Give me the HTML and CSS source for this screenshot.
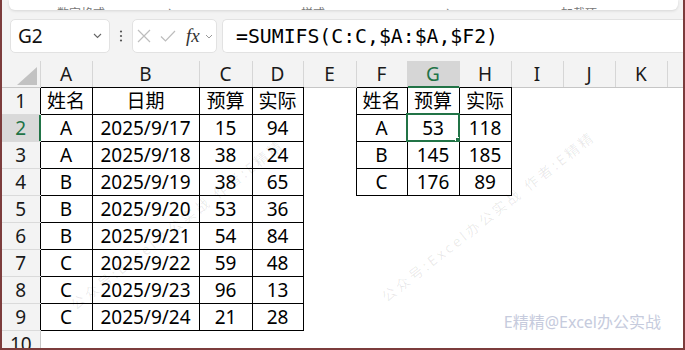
FILE: index.html
```html
<!DOCTYPE html>
<html lang="zh-CN">
<head>
  <meta charset="UTF-8" />
  <title>SUMIFS 汇总</title>
  <link rel="stylesheet" href="styles.css">
</head>
<body>
  <div class="window">
    <div class="ribbon-tail">
      <span class="rb rb-1">数字格式</span>
      <span class="rb rb-2">↘</span>
      <span class="rb rb-3">样式</span>
      <span class="rb rb-4">↘</span>
      <span class="rb rb-5">加载项</span>
    </div>

    <div class="formula-bar">
      <div class="name-box">
        <span>G2</span>
        <svg class="chev" width="9" height="6" viewBox="0 0 9 6"><path d="M1 1l3.5 3.5L8 1" fill="none" stroke="#666" stroke-width="1.1"/></svg>
      </div>
      <div class="grip">
        <svg width="4" height="12" viewBox="0 0 4 12"><circle cx="2" cy="1.5" r="1.1" fill="#555"/><circle cx="2" cy="6" r="1.1" fill="#555"/><circle cx="2" cy="10.5" r="1.1" fill="#555"/></svg>
      </div>
      <div class="fx-box">
        <svg class="ico-x" width="14" height="14" viewBox="0 0 14 14"><path d="M1 1l12 12M13 1L1 13" stroke="#bdbdbd" stroke-width="1.2"/></svg>
        <svg class="ico-ok" width="16" height="12" viewBox="0 0 16 12"><path d="M1 6.5L5.5 11L15 1" fill="none" stroke="#bdbdbd" stroke-width="1.2"/></svg>
        <span class="fx">fx</span>
        <svg class="chev-s" width="8" height="5" viewBox="0 0 8 5"><path d="M1 1l3 3l3-3" fill="none" stroke="#999" stroke-width="1"/></svg>
      </div>
      <div class="formula">=SUMIFS(C:C,$A:$A,$F2)</div>
    </div>

    <div class="sheet">
      <table class="grid">
        <colgroup>
          <col class="w-rh"><col class="w-a"><col class="w-b"><col class="w-c"><col class="w-d"><col class="w-e">
          <col class="w-f"><col class="w-g"><col class="w-h"><col class="w-i"><col class="w-j"><col class="w-k"><col class="w-l">
        </colgroup>
        <tr class="col-head">
          <th class="corner"><svg width="20" height="18" viewBox="0 0 20 18"><polygon points="0,18 20,18 20,0" fill="#c2c2c2"/></svg></th>
          <th class="hk">A</th><th class="hk">B</th><th class="hk">C</th><th class="hk">D</th><th>E</th>
          <th class="hk">F</th><th class="hk sel">G</th><th class="hk">H</th><th>I</th><th>J</th><th>K</th><th></th>
        </tr>
        <tr>
          <th class="rh rk">1</th>
          <td class="d">姓名</td><td class="d">日期</td><td class="d">预算</td><td class="d">实际</td><td></td>
          <td class="d">姓名</td><td class="d">预算</td><td class="d">实际</td><td></td><td></td><td></td><td></td>
        </tr>
        <tr>
          <th class="rh rk sel">2</th>
          <td class="d">A</td><td class="d">2025/9/17</td><td class="d">15</td><td class="d">94</td><td></td>
          <td class="d">A</td><td class="d active">53</td><td class="d">118</td><td></td><td></td><td></td><td></td>
        </tr>
        <tr>
          <th class="rh rk">3</th>
          <td class="d">A</td><td class="d">2025/9/18</td><td class="d">38</td><td class="d">24</td><td></td>
          <td class="d">B</td><td class="d">145</td><td class="d">185</td><td></td><td></td><td></td><td></td>
        </tr>
        <tr>
          <th class="rh rk">4</th>
          <td class="d">B</td><td class="d">2025/9/19</td><td class="d">38</td><td class="d">65</td><td></td>
          <td class="d">C</td><td class="d">176</td><td class="d">89</td><td></td><td></td><td></td><td></td>
        </tr>
        <tr>
          <th class="rh rk">5</th>
          <td class="d">B</td><td class="d">2025/9/20</td><td class="d">53</td><td class="d">36</td>
          <td></td><td></td><td></td><td></td><td></td><td></td><td></td><td></td>
        </tr>
        <tr>
          <th class="rh rk">6</th>
          <td class="d">B</td><td class="d">2025/9/21</td><td class="d">54</td><td class="d">84</td>
          <td></td><td></td><td></td><td></td><td></td><td></td><td></td><td></td>
        </tr>
        <tr>
          <th class="rh rk">7</th>
          <td class="d">C</td><td class="d">2025/9/22</td><td class="d">59</td><td class="d">48</td>
          <td></td><td></td><td></td><td></td><td></td><td></td><td></td><td></td>
        </tr>
        <tr>
          <th class="rh rk">8</th>
          <td class="d">C</td><td class="d">2025/9/23</td><td class="d">96</td><td class="d">13</td>
          <td></td><td></td><td></td><td></td><td></td><td></td><td></td><td></td>
        </tr>
        <tr>
          <th class="rh rk">9</th>
          <td class="d">C</td><td class="d">2025/9/24</td><td class="d">21</td><td class="d">28</td>
          <td></td><td></td><td></td><td></td><td></td><td></td><td></td><td></td>
        </tr>
        <tr>
          <th class="rh">10</th>
          <td></td><td></td><td></td><td></td><td></td><td></td><td></td><td></td><td></td><td></td><td></td><td></td>
        </tr>
      </table>

      <div class="watermark wm-left">公众号:Excel办公实战 作者:E精精</div>
      <div class="watermark wm-right">公众号:Excel办公实战 作者:E精精</div>
      <div class="signature">E精精@Excel办公实战</div>
    </div>
  </div>
</body>
</html>
```

FILE: styles.css
```css
body {
  margin: 0;
  background: #fff;
}

.window {
  width: 685px;
  height: 350px;
  box-sizing: border-box;
  border: 2px solid #7c3c3c;
  border-top: 0;
  background: #f3f3f3;
  overflow: hidden;
  display: flex;
  flex-direction: column;
  font-family: "Noto Sans", "Noto Sans CJK SC", sans-serif;
}

/* bottom edge of the ribbon, mostly scrolled away */
.ribbon-tail {
  flex-shrink: 0;
  height: 10px;
  margin: 0 5px 0 7px;
  background: #fff;
  border-radius: 0 0 6px 6px;
  box-shadow: 0 1px 3px rgba(0, 0, 0, 0.12);
  overflow: hidden;
  display: flex;
  align-items: flex-end;
}

.rb {
  font-size: 12px;
  line-height: 12px;
  color: #777;
  margin-bottom: -10px;
}

.rb-1 { margin-left: 48px; }
.rb-2 { margin-left: 62px; }
.rb-3 { margin-left: 122px; }
.rb-4 { margin-left: 120px; }
.rb-5 { margin-left: 104px; }

/* formula bar */
.formula-bar {
  flex-shrink: 0;
  display: flex;
  height: 34px;
  margin: 9px 0 8px 8px;
}

.name-box {
  width: 100px;
  box-sizing: border-box;
  background: #fff;
  border: 1px solid #e2e2e2;
  border-radius: 5px;
  display: flex;
  align-items: center;
  padding: 0 7px 0 7px;
  font-size: 19px;
  color: #111;
}

.name-box span {
  flex: 1;
}

.grip {
  width: 22px;
  display: flex;
  align-items: center;
  justify-content: center;
}

.fx-box {
  width: 85px;
  box-sizing: border-box;
  background: #fff;
  border: 1px solid #e2e2e2;
  border-radius: 5px;
  display: flex;
  align-items: center;
  padding-left: 4px;
  margin-right: 5px;
}

.ico-ok {
  margin-left: 9px;
}

.fx {
  margin-left: 10px;
  font-family: "Liberation Serif", serif;
  font-style: italic;
  font-size: 19px;
  color: #333;
  width: 16px;
}

.chev-s {
  margin-left: 3px;
}

.formula {
  flex: 1;
  box-sizing: border-box;
  background: #fff;
  border: 1px solid #e2e2e2;
  border-radius: 5px 0 0 5px;
  border-right: 0;
  display: flex;
  align-items: center;
  padding-left: 13px;
  font-family: "DejaVu Sans Mono", "Liberation Mono", monospace;
  font-size: 19.8px;
  color: #000;
}

/* worksheet */
.sheet {
  flex: 1;
  position: relative;
  background: #fff;
  overflow: hidden;
}

.grid {
  width: 681px;
  table-layout: fixed;
  border-collapse: collapse;
  font-size: 19px;
  color: #000;
}

.w-rh { width: 38px; }
.w-a { width: 52px; }
.w-b { width: 107px; }
.w-c { width: 53px; }
.w-d { width: 51px; }
.w-e { width: 53px; }
.w-f { width: 51px; }
.w-g { width: 52px; }
.w-h { width: 52px; }
.w-i { width: 52px; }
.w-j { width: 52px; }
.w-k { width: 52px; }
.w-l { width: 16px; }

.grid tr {
  height: 27px;
}

.grid tr.col-head {
  height: 26px;
}

.grid th,
.grid td {
  padding: 0;
  text-align: center;
  vertical-align: middle;
  white-space: nowrap;
  overflow: hidden;
  line-height: 22px;
  font-weight: normal;
}

.col-head th {
  background: #f3f3f3;
  border-right: 1px solid #d6d6d6;
  border-bottom: 1px solid #c6c6c6;
  color: #1a1a1a;
}

.col-head th.hk {
  border-bottom-color: #000;
}

.col-head th.sel {
  background: #d6d6d6;
  color: #217346;
  border-bottom-color: #217346;
  box-shadow: inset 0 -1px 0 #217346;
}

.corner {
  text-align: right !important;
  vertical-align: bottom !important;
}

.corner svg {
  display: block;
  margin: 0 3px 2px auto;
}

.rh {
  background: #f3f3f3;
  border-right: 1px solid #c6c6c6;
  border-bottom: 1px solid #dadada;
  color: #1a1a1a;
}

.rh.rk {
  border-right-color: #000;
}

.rh.sel {
  background: #d9d9d9;
  color: #217346;
  border-right-color: #217346;
  box-shadow: inset -1px 0 0 #217346;
}

.d {
  border: 1px solid #000;
}

.active {
  position: relative;
  outline: 2px solid #217346;
  outline-offset: -1px;
}

.active::after {
  content: "";
  position: absolute;
  right: -3px;
  bottom: -3px;
  width: 5px;
  height: 5px;
  background: #217346;
  border: 1px solid #fff;
}

/* overlays */
.watermark {
  position: absolute;
  transform: translate(-50%, -50%) rotate(-38deg);
  white-space: nowrap;
  font-size: 14px;
  letter-spacing: 3px;
  color: rgba(0, 0, 0, 0.09);
  pointer-events: none;
}

.wm-left {
  left: 175px;
  top: 163px;
}

.wm-right {
  left: 486px;
  top: 155px;
}

.signature {
  position: absolute;
  right: 22px;
  top: 252px;
  font-size: 16px;
  line-height: 18px;
  color: #c6cbdd;
}
```
